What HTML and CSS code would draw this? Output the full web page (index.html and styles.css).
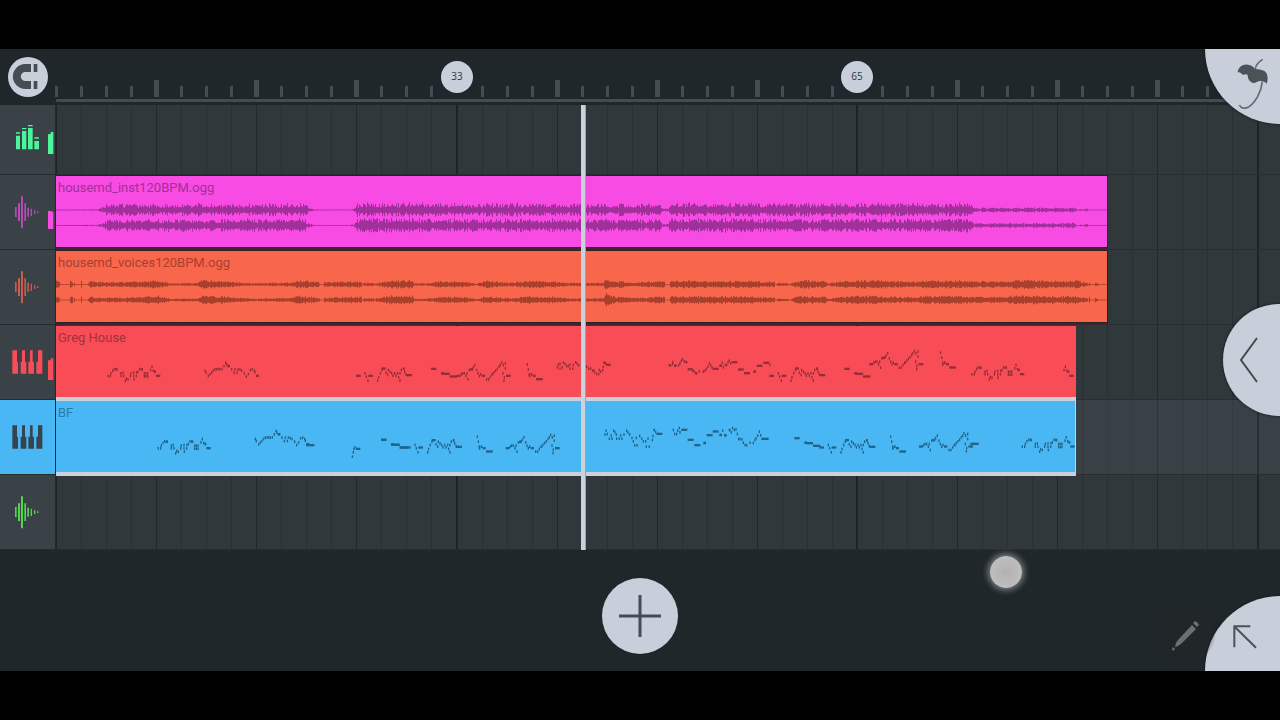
FILE: index.html
```html
<!DOCTYPE html>
<html lang="en">
<head>
    <meta charset="UTF-8">
    <meta name="viewport" content="width=device-width, initial-scale=1.0">
    <title>Playlist</title>
    <link rel="stylesheet" href="styles.css">
</head>
<body>
    <!-- shared track icons -->
    <svg class="sprite" aria-hidden="true">
        <symbol id="icon-wave" viewBox="0 0 165 225">
            <path d="M45 96h5v30h-5zM54 85h6v53h-6zM63 64h6v96h-6zM73 85h5v53h-5zM82 98h5v27h-5zM92 101h4v22h-4zM102 106h4v11h-4zM111 109h4v5h-4z"/>
        </symbol>
        <symbol id="icon-keys" viewBox="0 0 165 225">
            <path d="M37 76h14v34h3v36H37zM66 76h9v34h4v36H62v-36h4zM90 76h8v34h4v36H85v-36h5zM114 76h13v70h-18v-36h5z"/>
        </symbol>
    </svg>

    <main class="app">
        <header class="top-bar">
            <div class="snap">
                <button class="snap-btn" aria-label="Snap">
                    <svg viewBox="0 0 120 120">
                        <path class="magnet" d="M69 33H52a25 25 0 0 0 0 51H69"/>
                        <path d="M77 21h11v24H77zM77 72h11v24H77z"/>
                    </svg>
                </button>
            </div>
            <div class="ruler">
                <svg id="ticks" aria-hidden="true"></svg>
                <button class="marker" data-bar="33">33</button>
                <button class="marker" data-bar="65">65</button>
            </div>
        </header>

        <section class="playlist">
            <nav class="tracks">
                <button class="track master" aria-label="Master">
                    <svg viewBox="0 0 165 210">
                        <path d="M48 92h12v41H48zM66 78h13v55H66zM84 69h14v64H84zM103 108h14v25h-14z"/>
                        <path d="M48 82h12v4H48zM66 69h13v4H66zM84 60h14v4H84zM103 97h14v4h-14z"/>
                        <path d="M144 88l8-1v-6h8v66h-16z"/>
                    </svg>
                </button>
                <button class="track inst" aria-label="Instrumental">
                    <svg viewBox="0 0 165 225"><use href="#icon-wave"/><path class="meter" d="M144 108h8l8 3v51h-16z"/></svg>
                </button>
                <button class="track voices" aria-label="Voices">
                    <svg viewBox="0 0 165 225"><use href="#icon-wave"/></svg>
                </button>
                <button class="track greg" aria-label="Greg House">
                    <svg viewBox="0 0 165 225"><use href="#icon-keys"/><path d="M144 106h8v-6h8v65h-16z"/></svg>
                </button>
                <button class="track bf active" aria-label="BF">
                    <svg viewBox="0 0 165 225"><use href="#icon-keys"/></svg>
                </button>
                <button class="track empty" aria-label="Empty audio track">
                    <svg viewBox="0 0 165 225"><use href="#icon-wave"/></svg>
                </button>
            </nav>

            <div class="timeline">
                <svg id="grid" aria-hidden="true"></svg>
                <div class="lanes">
                    <div class="lane master"></div>
                    <div class="lane">
                        <div class="clip clip-inst" data-length="84">
                            <span class="clip-name">housemd_inst120BPM.ogg</span>
                            <svg id="waveInst"></svg>
                        </div>
                    </div>
                    <div class="lane">
                        <div class="clip clip-voices" data-length="84">
                            <span class="clip-name">housemd_voices120BPM.ogg</span>
                            <svg id="waveVoices"></svg>
                        </div>
                    </div>
                    <div class="lane">
                        <div class="clip clip-greg selected" data-length="81.5">
                            <span class="clip-name">Greg House</span>
                            <svg id="notesGreg"></svg>
                        </div>
                    </div>
                    <div class="lane active">
                        <div class="clip clip-bf selected" data-length="81.5">
                            <span class="clip-name">BF</span>
                            <svg id="notesBf"></svg>
                        </div>
                    </div>
                    <div class="lane"></div>
                </div>
                <div class="playhead" data-bar="43"></div>
            </div>
        </section>

        <footer class="bottom-bar">
            <button class="add-btn" aria-label="Add track">
                <svg viewBox="0 0 76 76"><path d="M38 17v42M17 38h42"/></svg>
            </button>
        </footer>

        <button class="corner logo-btn" aria-label="Menu">
            <svg viewBox="0 0 225 225">
                <path d="M98 70C100 54 113 45 128 47C140 48 145 53 151 60C159 62 168 60 178 66C189 73 190 90 185 104C180 98 172 95 164 96C157 98 152 101 147 102C140 102 133 96 130 89C128 83 129 79 126 76C121 75 116 80 111 76C106 70 103 70 98 70Z"/>
                <path class="stem" d="M151 60C152 47 162 38 173 31"/>
                <path class="stem" d="M172 98C169 130 149 162 132 173C120 180 108 179 103 168"/>
            </svg>
        </button>
        <button class="side-btn" aria-label="Open panel">
            <svg viewBox="0 0 57 112"><path d="M34 34L18 56L34 78"/></svg>
        </button>
        <button class="corner full-btn" aria-label="Collapse">
            <svg viewBox="0 0 225 225"><path d="M88 154V91H136M89 92L153 155"/></svg>
        </button>
        <button class="pencil-btn" aria-label="Edit">
            <svg viewBox="0 0 58 58">
                <path d="M18 42q0-4 3-7L35 20l4 4L25 38q-3 3-7 4zM36 18l2-2q3 1 4 4l-2 2zM16 42l2 2-2 2-1-2z"/>
            </svg>
        </button>
        <div class="touch"></div>
    </main>

    <script src="script.js"></script>
</body>
</html>
```

FILE: styles.css
```css
* {
    margin: 0;
    padding: 0;
    box-sizing: border-box;
    font-family: Roboto, "Open Sans", sans-serif;
}

body {
    background-color: #000;
    display: flex;
    flex-direction: column;
    height: 100vh;
    padding: 49px 0;
    overflow: hidden;
}

button {
    border: none;
    background: none;
    cursor: pointer;
}

svg {
    display: block;
}

.sprite {
    display: none;
}

.app {
    position: relative;
    flex: 1;
    display: flex;
    flex-direction: column;
    background-color: #20272b;
    overflow: hidden;
}

/* ruler */
.top-bar {
    display: flex;
    height: 56px;
}

.snap {
    width: 56px;
    display: flex;
    align-items: center;
    justify-content: center;
}

.snap-btn {
    width: 40px;
    height: 40px;
    border-radius: 50%;
    background-color: #c8cfda;
    fill: #454c52;
}

.snap-btn .magnet {
    fill: none;
    stroke: #454c52;
    stroke-width: 24;
}

.ruler {
    position: relative;
    flex: 1;
    min-width: 0;
}

#ticks {
    width: 100%;
    height: 56px;
    fill: #454c51;
    overflow: visible;
}

.marker {
    position: absolute;
    top: 12px;
    width: 32px;
    height: 32px;
    padding-bottom: 2px;
    border-radius: 50%;
    background-color: #c8cfda;
    color: #30363b;
    font-family: "Open Sans", sans-serif;
    font-size: 10px;
    transform: translateX(-50%);
}

/* track headers */
.playlist {
    display: flex;
}

.tracks {
    width: 56px;
    border-right: 1px solid #22292d;
}

.track {
    display: block;
    width: 100%;
    height: 75px;
    background-color: #3a4147;
    border-bottom: 1px solid #252c30;
}

.track svg {
    width: 55px;
    height: 75px;
}

.track.master,
.track.master svg {
    height: 70px;
}

.track.master {
    fill: #4df59a;
}

.track.inst {
    fill: #b64bb5;
}

.track.inst .meter {
    fill: #f84be4;
}

.track.voices {
    fill: #c95c4a;
}

.track.greg {
    fill: #f84d58;
}

.track.active {
    background-color: #4ab7f5;
    fill: #35444f;
}

.track.empty {
    fill: #55d34f;
}

/* timeline */
.timeline {
    position: relative;
    flex: 1;
    min-width: 0;
    display: grid;
    background-color: #30383b;
    overflow: hidden;
}

#grid {
    grid-area: 1 / 1;
    width: 100%;
    height: 100%;
}

#grid .step {
    fill: #293033;
}

#grid .bar {
    fill: #21292c;
}

#grid .section {
    fill: #1d2427;
}

.lanes {
    grid-area: 1 / 1;
    min-width: 0;
}

.lane {
    height: 75px;
    border-bottom: 1px solid #272e31;
    padding-top: 1px;
}

.lane.master {
    height: 70px;
}

.lane.active {
    background-color: rgba(110, 115, 145, 0.14);
}

.clip {
    position: relative;
    height: 71px;
    overflow: hidden;
    box-shadow: 0 0 0 1px #2a2127, 0 2px 0 1px #40242f;
}

.clip.selected {
    height: 75px;
    border-bottom: 4px solid #cbd0da;
    box-shadow: none;
}

.clip svg {
    width: 100%;
    height: 100%;
}

/* the name is drawn over the waveform */
.clip-name {
    position: absolute;
    top: 4px;
    left: 2px;
    font-size: 13px;
    line-height: 16px;
}

.clip-inst {
    background-color: #f84be4;
    color: #a0309a;
    stroke: #a0309a;
}

.clip-voices {
    background-color: #f8664c;
    color: #a8402d;
    stroke: #a8402d;
}

.clip-greg {
    background-color: #f84d57;
    color: #a3303c;
    fill: #962d38;
}

.clip-bf {
    background-color: #4ab7f5;
    color: #2a7bab;
    fill: #20658a;
    border-right: 1px solid #cbd0da;
}

.playhead {
    position: absolute;
    top: 0;
    bottom: 0;
    width: 5px;
    background-color: #cbd2dc;
    border-right: 1px solid #9aa2ac;
}

/* bottom */
.bottom-bar {
    flex: 1;
    display: flex;
    align-items: center;
    justify-content: center;
    padding-top: 11px;
}

.add-btn {
    width: 76px;
    height: 76px;
    border-radius: 50%;
    background-color: #c8cfda;
    stroke: #444b56;
    stroke-width: 3;
}

/* floating buttons at the right edge */
.corner,
.side-btn {
    position: absolute;
    right: 0;
    background-color: #c8cfda;
    box-shadow: 0 0 3px #11171a;
}

.corner {
    width: 75px;
    height: 75px;
}

.logo-btn {
    top: 0;
    border-bottom-left-radius: 75px;
    fill: #4b5258;
}

.logo-btn .stem {
    fill: none;
    stroke: #646b74;
    stroke-width: 5;
}

.side-btn {
    top: 50%;
    width: 57px;
    height: 112px;
    border-radius: 56px 0 0 56px;
    transform: translateY(-50%);
    fill: none;
    stroke: #41484f;
    stroke-width: 2;
}

.full-btn {
    bottom: 0;
    border-top-left-radius: 75px;
    fill: none;
    stroke: #4b5158;
    stroke-width: 6;
}

.pencil-btn {
    position: absolute;
    right: 65px;
    bottom: 8px;
    width: 58px;
    height: 58px;
    border-radius: 50%;
    background-color: rgba(40, 35, 32, 0.14);
    fill: #6c7071;
}

.touch {
    position: absolute;
    right: 258px;
    bottom: 83px;
    width: 32px;
    height: 32px;
    border-radius: 50%;
    background: radial-gradient(#b4b0b1, #c2c5c5);
    box-shadow: 0 0 6px 2px rgba(190, 196, 198, 0.6);
}
```

FILE: script.js
```js
// two bars take one grid step
const STEP = 801 / 32;
const BAR = STEP / 2;

function rect(x, y, w, h, cls) {
    return `<rect x="${x}" y="${y}" width="${w}" height="${h}" class="${cls || ''}"/>`;
}

// Ruler ticks and grid lines
let ticks = rect(0, 50, '100%', 3);
let grid = '';
for (let i = 0; i < 160; i++) {
    const x = Math.round(i * STEP);
    const big = i % 4 === 0 && i > 0;
    const marked = i === 16 || i === 32;
    if (!marked) {
        ticks += big ? rect(x - 2, 31, 5, 17) : rect(x - 1, 37, 3, 11);
    }
    if (i % 16 === 0) grid += rect(x - 1, 0, 2, '100%', 'section');
    else if (i % 4 === 0) grid += rect(x, 0, 1, '100%', 'bar');
    else grid += rect(x, 0, 1, '100%', 'step');
}
document.getElementById('ticks').innerHTML = ticks;
document.getElementById('grid').innerHTML = grid;

// Place everything that is measured in bars
document.querySelectorAll('[data-bar]').forEach(el => {
    el.style.left = Math.round((el.dataset.bar - 1) * BAR) - (el.className === 'playhead' ? 1 : 0) + 'px';
});
document.querySelectorAll('.clip').forEach(el => {
    el.style.width = Math.round(el.dataset.length * BAR) + 'px';
});

// Waveforms: [x, amplitude] points, linear in between
const instEnvelope = [
    [0, 0.6], [38, 0.8], [44, 2], [50, 7], [140, 7], [144, 7], [148, 3.5], [152, 7], [240, 7], [247, 9], [252, 3], [258, 0.6],
    [294, 0.6], [299, 3], [300, 8], [604, 7], [606, 2], [612, 1.5], [613, 8], [905, 7.5], [912, 9], [918, 2.8],
    [1012, 2.8], [1017, 4.5], [1020, 1], [1022, 0.5], [1025, 1.5], [1026, 0.4], [1031, 2], [1032, 0.4], [1051, 0.4]
];
const voiceEnvelope = [
    [0, 4], [3, 3.5], [4, 0.4], [13, 0.4], [14, 4.5], [16, 4], [17, 0.4], [18, 3], [19, 0.4], [24, 0.4], [25, 4.5], [26, 0.4], [31, 0.4], [33, 4], [45, 3], [62, 3],
    [70, 3], [104, 5], [114, 1.5], [142, 2], [146, 5], [155, 5], [180, 3], [195, 1.5], [236, 2.5], [240, 5], [262, 3],
    [264, 0.4], [267, 0.4], [268, 3], [305, 4], [306, 0.4], [308, 2], [317, 2], [318, 0.4], [320, 2], [334, 5], [356, 4.5], [358, 1.5], [370, 1.5], [384, 4], [410, 3.5],
    [420, 1], [428, 4.5], [445, 3], [455, 2], [470, 4.5], [500, 3.5], [515, 2], [547, 2], [550, 7.5], [560, 4], [580, 2.5],
    [608, 4.5], [609, 0.4], [613, 0.4], [614, 4.5], [700, 4], [718, 3], [719, 0.4], [722, 2], [731, 1.5], [733, 0.4], [740, 4], [748, 5], [769, 4], [771, 1.5],
    [790, 4.5], [815, 5], [860, 3], [868, 5], [950, 3.5], [960, 5.5], [1005, 4], [1020, 5], [1025, 3], [1031, 2],
    [1032, 0.4], [1032.5, 0.4], [1033, 4], [1034, 0.4], [1038, 0.4], [1039, 2.5], [1043, 0.5], [1051, 0.5]
];

function level(points, x) {
    for (let i = 1; i < points.length; i++) {
        if (x <= points[i][0]) {
            const [x0, a0] = points[i - 1];
            const [x1, a1] = points[i];
            return a0 + (a1 - a0) * (x - x0) / (x1 - x0);
        }
    }
    return 0;
}

function drawWave(id, points, centers, rough) {
    let seed = 7;
    const random = () => (seed = (seed * 16807) % 2147483647) / 2147483647;
    let d = '';
    centers.forEach(y => {
        for (let x = 0; x < 1051; x++) {
            const a = level(points, x);
            const peak = 1 - rough * random();
            const up = Math.max(0.4, a * peak * (0.8 + 0.2 * random()));
            const down = Math.max(0.4, a * peak * (0.75 + 0.2 * random()));
            d += `M${x + 0.5} ${(y - up).toFixed(1)}V${(y + down).toFixed(1)}`;
        }
    });
    document.getElementById(id).innerHTML = `<path d="${d}"/>`;
}

drawWave('waveInst', instEnvelope, [34, 49.5], 0.65);
drawWave('waveVoices', voiceEnvelope, [33.5, 49], 0.5);

// Note phrases: x, y and optional width, in thirds of a pixel
const phrases = {
    verse: '324,168 331,168 333,160 338,152 343,147 348,148,7 363,160 363,168 371,168 369,158 376,183 379,176 384,178 391,168 393,160 401,168 401,158 409,168 410,158 402,178 414,155 419,147 424,148,7 433,160 433,169 438,169 443,169 443,160 438,160 452,150 456,140 460,152 464,155,6 470,168,13',
    hook: '615,152 618,158 625,168 630,163 635,158 640,152 645,148 650,148 655,147 660,148 666,147 672,138 677,128 680,133 684,138,8 695,148 702,158 705,148 711,158 714,148 720,149 725,152 733,160 739,170 745,162 751,150 757,148 763,152 765,157 770,168,9',
    riff: '110,168,14 135,160 139,170 147,168,14 144,182 173,182 176,172 181,160 186,150 187,146,12 198,158 203,165 205,150 210,155 215,160 219,167 224,160 228,167 233,160 236,172 240,182 240,160 244,150 250,146,6 254,155 258,163 260,166,18',
    slide: '335,147,16 365,160,8 371,162,20 391,170,22',
    climb: '412,168,12 424,163 428,160 433,160 438,168 444,178 441,160 448,150,5 453,148,8 460,142 465,135 470,150 474,160 478,168 482,163 487,168,10 500,178 506,178 511,170 516,163,6 522,157 527,152 532,147 537,140 541,135 545,128 550,135 556,130 556,145 549,160 553,172 552,182 560,168,14',
    drop: '622,133 625,148 628,163 628,168,5 634,163,5 640,168,9 650,178,20',
    chorus: '712,142 715,134 720,132 720,146 727,142 730,128 735,132 740,138 745,138 750,134 750,146 758,146 760,135 767,127 771,131 776,136 791,142 800,140 806,146 812,146 818,152 822,152 830,162 824,158 836,162 838,150 842,155 848,150 850,140 852,128,5 857,130 860,135,14',
    bridgeA: '88,136,8 98,132 98,126 104,137,8 116,136 120,130 124,122 128,118 133,125,6 140,127 145,148,6 151,148,9 158,153 162,153 166,159 170,160 178,154 190,155 195,152 199,147 204,140 208,130 212,136 216,142 220,147,18 240,137,8 247,128 250,142 256,135,8 264,127 268,122 272,130 277,127,17 296,149,17 314,160,18 342,155,8 352,138,17 372,129,18 390,135',
    bridgeB: '100,328 104,340 110,340 113,330 118,322 120,335 126,328,18 145,358,18 165,374,18 192,367,8 202,344,18 220,333,18 240,343,8 248,330 254,344,8 268,328,6 274,335 278,322 283,328 288,326 292,340 296,355 300,355 306,356 310,366 315,373 320,374 330,366 340,367 345,358 348,353 353,345 358,333 362,344 366,355,22',
    chorusB: '855,342 858,330 862,340 868,354 876,354 874,345 881,330 885,335 890,354 889,342 898,354 906,354 902,344 912,342 920,330 924,336 929,342 936,352 944,374 940,362 951,374 949,352 959,346 965,354 970,362 979,378 977,362 988,378 984,354 997,358 999,346 1002,328,5 1007,334 1011,340,18',
    pickup: '97,408 100,395 102,385 105,380 110,385,13',
    held: '0,0,25'
};

// each entry: phrase, x offset, y offset
const gregNotes = [
    ['verse', -168, -18], ['hook', -168, -18], ['riff', 792, -18], ['slide', 792, -18], ['climb', 792, -18],
    ['drop', 792, -18], ['chorus', 792, -18], ['bridgeA', 1752, -18], ['riff', 2032, -18], ['slide', 2032, -18],
    ['climb', 2030, -53], ['drop', 2032, -53], ['verse', 2424, -23], ['verse', 2572, -18]
];
const bfNotes = [
    ['verse', -17, -26], ['hook', -17, -38], ['held', 752, 133], ['pickup', 792, -241], ['slide', 642, -30], ['riff', 942, -28],
    ['slide', 642, -30], ['drop', 642, -26], ['climb', 939, -26], ['chorusB', 792, -241], ['bridgeB', 1752, -241], ['slide', 1882, -35],
    ['riff', 2182, -28], ['drop', 1882, -26], ['climb', 2179, -31], ['held', 2745, 129], ['verse', 2575, -31]
];

function drawNotes(id, list, skip) {
    let out = '';
    list.forEach(([name, dx, dy]) => {
        phrases[name].split(' ').forEach(n => {
            const [x, y, w = 4] = n.split(',').map(Number);
            if (skip && skip(dx, x)) return;
            out += rect(x + dx - 2, y + dy - 4, w, w > 8 ? 7 : 8);
        });
    });
    document.getElementById(id).innerHTML = `<g transform="scale(${1 / 3})">${out}</g>`;
}

drawNotes('notesGreg', gregNotes, (dx, x) => dx === 2572 && x < 446);
drawNotes('notesBf', bfNotes);
```
